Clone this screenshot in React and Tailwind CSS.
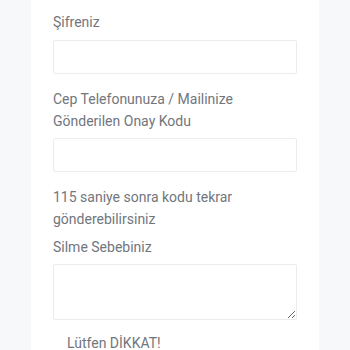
import React from 'react';

const Label = ({ children, className = '' }) => (
  <p className={`text-[14px] leading-[22px] text-[#71767e] ${className}`}>{children}</p>
);

const Field = () => (
  <input
    type="text"
    className="block w-full h-[34px] bg-white border border-[#ececec] rounded-[2px] outline-none"
  />
);

export default function App() {
  return (
    <div
      className="w-[350px] h-[350px] overflow-hidden bg-[#f7f8fa] flex justify-center"
      style={{ fontFamily: 'Roboto, "Noto Sans", sans-serif' }}
    >
      <div className="w-[288px] bg-white px-[22px] pt-[11px] shrink-0">
        <Label>Şifreniz</Label>
        <div className="mt-[7px]">
          <Field />
        </div>

        <Label className="mt-[14px]">
          Cep Telefonunuza / Mailinize
          <br />
          Gönderilen Onay Kodu
        </Label>
        <div className="mt-[6px]">
          <Field />
        </div>

        <Label className="mt-[14px]">
          115 saniye sonra kodu tekrar
          <br />
          gönderebilirsiniz
        </Label>

        <Label className="mt-[6px]">Silme Sebebiniz</Label>
        <div className="mt-[6px]">
          <textarea className="block w-full h-[56px] bg-white border border-[#ececec] rounded-[2px] outline-none" />
        </div>

        <Label className="mt-[12px] pl-[14px]">Lütfen DİKKAT!</Label>
      </div>
    </div>
  );
}
